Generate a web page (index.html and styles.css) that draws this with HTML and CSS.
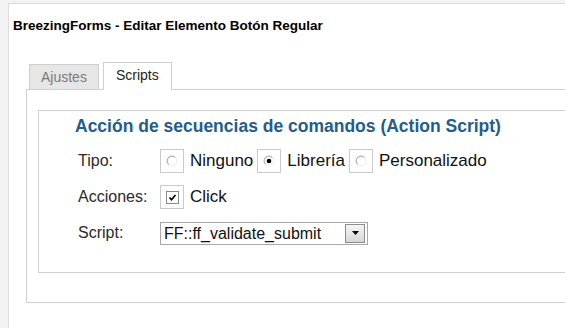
FILE: index.html
```html
<!DOCTYPE html>
<html lang="es">

<head>
    <meta charset="UTF-8">
    <title>BreezingForms - Editar Elemento Botón Regular</title>
    <link rel="stylesheet" href="styles.css">
</head>

<body>
    <div class="page">
        <h1 class="page-title">BreezingForms - Editar Elemento Botón Regular</h1>

        <div class="tabs-area">
            <ul class="tab-list">
                <li class="tab">Ajustes</li>
                <li class="tab active">Scripts</li>
            </ul>
            <div class="tab-panel">
                <div class="script-box">
                    <h2 class="box-title">Acción de secuencias de comandos (Action Script)</h2>

                    <div class="form-row">
                        <span class="row-label">Tipo:</span>
                        <span class="opt-box">
                            <svg width="12" height="12" viewBox="0 0 12 12"><circle cx="6" cy="6" r="5" fill="#fff" stroke="#ececec"/><path d="M2.6 9.4 A4.8 4.8 0 0 1 9.4 2.6" fill="none" stroke="#b4b4b4" stroke-width="1.2"/></svg>
                        </span>
                        <span class="opt-text">Ninguno</span>
                        <span class="opt-box">
                            <svg width="12" height="12" viewBox="0 0 12 12"><circle cx="6" cy="6" r="5" fill="#fff" stroke="#ececec"/><path d="M2.6 9.4 A4.8 4.8 0 0 1 9.4 2.6" fill="none" stroke="#b4b4b4" stroke-width="1.2"/><circle cx="6" cy="6" r="2.3" fill="#000"/></svg>
                        </span>
                        <span class="opt-text">Librería</span>
                        <span class="opt-box">
                            <svg width="12" height="12" viewBox="0 0 12 12"><circle cx="6" cy="6" r="5" fill="#fff" stroke="#ececec"/><path d="M2.6 9.4 A4.8 4.8 0 0 1 9.4 2.6" fill="none" stroke="#b4b4b4" stroke-width="1.2"/></svg>
                        </span>
                        <span class="opt-text">Personalizado</span>
                    </div>

                    <div class="form-row">
                        <span class="row-label">Acciones:</span>
                        <span class="opt-box">
                            <svg width="13" height="13" viewBox="0 0 13 13"><rect x="0.5" y="0.5" width="12" height="12" fill="#fff" stroke="#8a8a8a"/><path d="M3.5 6.5 L5.5 8.8 L9.5 4" fill="none" stroke="#000" stroke-width="1.7"/></svg>
                        </span>
                        <span class="opt-text">Click</span>
                    </div>

                    <div class="form-row">
                        <span class="row-label">Script:</span>
                        <div class="select-box">
                            <span class="select-value">FF::ff_validate_submit</span>
                            <span class="select-btn">
                                <svg width="7" height="4" viewBox="0 0 7 4"><path d="M0 0 H7 L3.5 4 Z" fill="#000"/></svg>
                            </span>
                        </div>
                    </div>
                </div>
            </div>
        </div>
    </div>
</body>

</html>
```

FILE: styles.css
```css
body {
    margin: 0;
    background-color: #f3f3f3;
    font-family: "Liberation Sans", Arial, sans-serif;
    overflow: hidden;
}

.page {
    margin: 3px 0 0 8px;
    height: 325px;
    padding: 0 0 0 4px;
    background-color: #fff;
    border-top: 1px solid #dcdcdc;
    border-left: 1px solid #dcdcdc;
}

.page-title {
    margin: 14px 0 0;
    font-size: 13.5px;
    line-height: 16px;
    font-weight: bold;
    color: #000;
}

.tabs-area {
    margin: 28px 0 0 13px;
}

.tab-list {
    display: flex;
    align-items: flex-end;
    margin: 0;
    padding: 0 0 0 3px;
    list-style: none;
}

.tab {
    height: 24px;
    margin-right: 4px;
    padding: 0 11px;
    font-size: 14px;
    line-height: 24px;
    color: #7a7a7a;
    background-color: #e6e6e6;
    border: 1px solid #cfcfcf;
    border-bottom: 0;
}

.tab.active {
    height: 27px;
    margin-bottom: -1px;
    padding: 0 12px;
    line-height: 25px;
    color: #222;
    background-color: #fff;
    position: relative;
}

.tab-panel {
    padding: 20px 0 29px 11px;
    border: 1px solid #d0d0d0;
    border-right: 0;
}

.script-box {
    padding: 6px 0 27px 36px;
    border: 1px solid #d0d0d0;
    border-right: 0;
}

.box-title {
    margin: 0 0 14px;
    font-size: 17.5px;
    line-height: 18px;
    font-weight: bold;
    color: #1f5d8c;
}

.form-row {
    display: flex;
    align-items: center;
    height: 24px;
    margin-bottom: 12px;
    padding-left: 3px;
    font-size: 16px;
    color: #111;
}

.form-row:last-child {
    margin-bottom: 0;
}

.row-label {
    width: 82px;
    color: #2a2a2a;
}

.opt-box {
    display: flex;
    align-items: center;
    justify-content: center;
    width: 22px;
    height: 22px;
    background-color: #fff;
    border: 1px solid #cacaca;
}

.opt-text {
    margin: 0 4px 0 6px;
    font-size: 17px;
}

.select-box {
    display: flex;
    align-items: center;
    justify-content: space-between;
    width: 206px;
    height: 21px;
    border: 1px solid #a8a8a8;
}

.select-value {
    padding-left: 3px;
    line-height: 21px;
}

.select-btn {
    display: flex;
    align-items: center;
    justify-content: center;
    width: 18px;
    height: 17px;
    margin-right: 2px;
    background: linear-gradient(#f6f6f6, #d6d6d6);
    border: 1px solid #8c8c8c;
}
```
